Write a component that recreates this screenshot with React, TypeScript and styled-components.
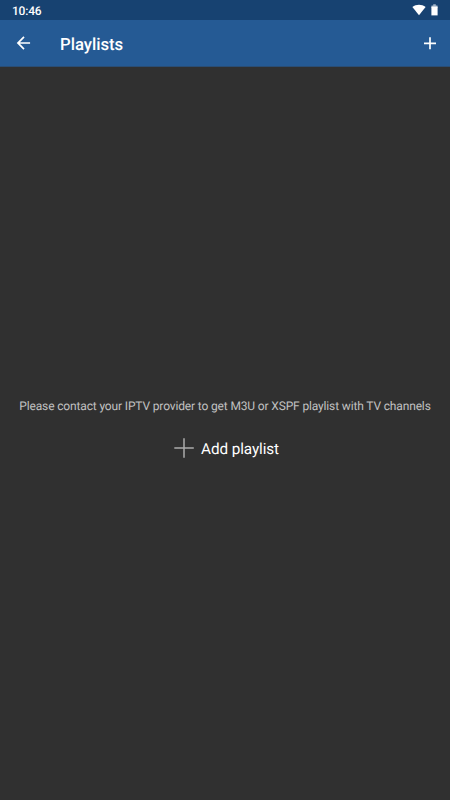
import React from "react";
import styled, { createGlobalStyle } from "styled-components";

const GlobalStyle = createGlobalStyle`
  * { box-sizing: border-box; }
  body {
    margin: 0;
    background: #303030;
    font-family: Roboto, sans-serif;
    text-rendering: geometricPrecision;
  }
`;

const Screen = styled.div`
  display: flex;
  flex-direction: column;
  height: 100vh;
  background: #303030;
`;

const StatusBar = styled.header`
  display: flex;
  align-items: center;
  height: 20px;
  padding: 0 12px;
  background: #174271;
  color: #fff;
`;

const Clock = styled.span`
  flex: 1;
  padding-top: 2px;
  font-size: 12px;
  line-height: 19px;
  font-weight: 500;
  letter-spacing: -0.2px;
`;

const StatusIcons = styled.div`
  display: flex;
  align-items: center;
  gap: 5px;
`;

const Toolbar = styled.nav`
  display: flex;
  align-items: center;
  height: 47px;
  padding: 0 13px 0 13px;
  background: #255a94;
  border-bottom: 1px solid #2a4d74;
`;

const IconButton = styled.button`
  display: flex;
  padding: 0;
  border: 0;
  background: none;
`;

const Title = styled.h1`
  flex: 1;
  margin: 0 0 0 27px;
  padding-top: 3px;
  color: #fff;
  font-size: 16.8px;
  line-height: 20px;
  font-weight: 500;
  letter-spacing: -0.05px;
`;

const Content = styled.main`
  flex: 1;
  display: flex;
  flex-direction: column;
  align-items: center;
  padding-top: 331px;
`;

const Hint = styled.p`
  margin: 0;
  color: #c1c1c1;
  font-size: 12px;
  line-height: 16px;
  letter-spacing: -0.145px;
  white-space: nowrap;
`;

const AddButton = styled.button`
  display: flex;
  align-items: center;
  gap: 7px;
  height: 22px;
  margin: 23px 0 0 3px;
  padding: 0;
  border: 0;
  background: none;
  color: #fff;
  font: 400 15.3px/22px Roboto, sans-serif;
  letter-spacing: -0.1px;
  text-rendering: geometricPrecision;
`;

const AddLabel = styled.span`
  padding-top: 1px;
`;

export default function App() {
  return (
    <Screen>
      <GlobalStyle />
      <StatusBar>
        <Clock>10:46</Clock>
        <StatusIcons>
          <svg width="14" height="12" viewBox="0 0 14 12" fill="#fff"><path d="M.4 3C4.2-.1 9.8-.1 13.6 3L7 11.2Z" /></svg>
          <svg width="7" height="12" viewBox="0 0 7 12">
            <path d="M2.2.3h2.6v1.1h1.7V4h-6V1.4h1.7Z" fill="#9fb3c8" />
            <path d="M.4 2.6h6.2v8.8H.4Z" fill="#fff" />
          </svg>
        </StatusIcons>
      </StatusBar>
      <Toolbar>
        <IconButton aria-label="Back">
          <svg width="20" height="20" viewBox="0 0 24 24" fill="#fff"><path d="M20.5 11H8.33l5.59-5.59L12.5 4l-8 8 8 8 1.41-1.41L8.33 13H20.5v-2z" /></svg>
        </IconButton>
        <Title>Playlists</Title>
        <IconButton aria-label="Add">
          <svg width="14" height="14" viewBox="0 0 14 14" fill="none" stroke="#fff" strokeWidth="1.7"><path d="M1 7.3h12M7 1.3v12" /></svg>
        </IconButton>
      </Toolbar>
      <Content>
        <Hint>Please contact your IPTV provider to get M3U or XSPF playlist with TV channels</Hint>
        <AddButton>
          <svg width="20" height="20" viewBox="0 0 20 20" fill="none" stroke="#aaa" strokeWidth="1.5"><path d="M.3 10h19.5M10 .3v19.5" /></svg>
          <AddLabel>Add playlist</AddLabel>
        </AddButton>
      </Content>
    </Screen>
  );
}
